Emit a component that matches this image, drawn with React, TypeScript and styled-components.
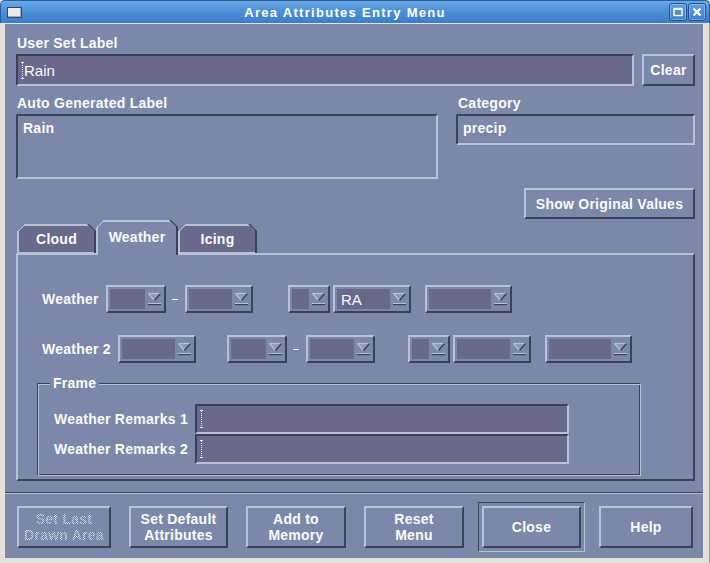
import React from "react";
import styled, { createGlobalStyle, css } from "styled-components";

const C = {
  bg: "#7c88a9",
  field: "#68698b",
  dark: "#3d4156",
  light: "#b9c1d6",
  text: "#fafafa",
  frame: "#e4e1d9",
};

const Global = createGlobalStyle`
  html, body { margin: 0; padding: 0; background: ${C.frame}; }
  body { font-family: "Liberation Sans", Arial, sans-serif; }
  * { box-sizing: border-box; }
`;

const raised = css`
  border-style: solid;
  border-width: 2px;
  border-color: ${C.light} ${C.dark} ${C.dark} ${C.light};
`;
const sunken = css`
  border-style: solid;
  border-width: 2px;
  border-color: ${C.dark} ${C.light} ${C.light} ${C.dark};
`;
const boldFont = css`
  font: bold 14px/16px "Liberation Sans", Arial, sans-serif;
  letter-spacing: 0.25px;
`;

const Window = styled.div`
  width: 710px;
  height: 563px;
  display: flex;
  flex-direction: column;
  background: ${C.frame};
`;

const TitleBar = styled.div`
  height: 23px;
  flex: none;
  display: flex;
  align-items: center;
  padding: 0 3px 0 6px;
  background: linear-gradient(to bottom, #6ba9e7 0%, #4d90d8 45%, #3c7dc7 100%);
  border: 1px solid #2b5d9c;
  border-bottom: none;
  border-radius: 5px 5px 0 0;
`;

const TitleIcon = styled.div`
  width: 15px;
  height: 11px;
  background: #e9e9ec;
  border: 1px solid #33466a;
  box-shadow: inset -1px -1px 0 #a8acb6;
`;

const TitleText = styled.div`
  flex: 1;
  text-align: center;
  color: #fff;
  font: bold 13px "Liberation Sans", Arial, sans-serif;
  letter-spacing: 1.3px;
`;

const TitleButton = styled.div`
  width: 18px;
  height: 18px;
  margin-left: 1px;
  display: flex;
  align-items: center;
  justify-content: center;
  border: 1px solid #23538f;
  border-radius: 3px;
  background: linear-gradient(to bottom, #5f9fe0, #3f80ca);
  box-shadow: inset 0 0 0 1px rgba(255, 255, 255, 0.3);
`;

const FrameBody = styled.div`
  flex: 1;
  display: flex;
  padding: 1px 6px 5px 5px;
  border-right: 1px solid #9e9b93;
  background: ${C.frame};
`;

const Body = styled.div`
  flex: 1;
  display: flex;
  flex-direction: column;
  background: ${C.bg};
  color: ${C.text};
`;

const Main = styled.div`
  display: flex;
  flex-direction: column;
  padding: 11px 8px 0 11px;
`;

const Label = styled.div<{ $pl?: number }>`
  ${boldFont};
  height: 16px;
  padding-left: ${(p) => p.$pl ?? 1}px;
  white-space: nowrap;
`;

const FieldRow = styled.div`
  display: flex;
  gap: 8px;
  margin-top: 3px;
  height: 32px;
`;

const TextField = styled.div`
  ${sunken};
  flex: 1;
  background: ${C.field};
  display: flex;
  align-items: center;
  padding: 0 3px 0 2px;
  font: 15px "Liberation Sans", Arial, sans-serif;
`;

const Button = styled.div<{ $w: number; $h: number }>`
  ${raised};
  ${boldFont};
  width: ${(p) => p.$w}px;
  height: ${(p) => p.$h}px;
  flex: none;
  background: ${C.bg};
  display: flex;
  align-items: center;
  justify-content: center;
  text-align: center;
  white-space: nowrap;
`;

const DisabledText = styled.span`
  color: transparent;
  background-image: repeating-conic-gradient(#dfe3ef 0 25%, transparent 0 50%);
  background-size: 2px 2px;
  -webkit-background-clip: text;
  background-clip: text;
`;

const InfoRow = styled.div`
  display: flex;
  justify-content: space-between;
  margin-top: 9px;
`;

const InfoColumn = styled.div<{ $w: number }>`
  width: ${(p) => p.$w}px;
  display: flex;
  flex-direction: column;
`;

const InfoBox = styled.div<{ $h: number }>`
  ${sunken};
  ${boldFont};
  height: ${(p) => p.$h}px;
  margin-top: 3px;
  padding: 4px 5px;
`;

const RightAction = styled.div`
  display: flex;
  justify-content: flex-end;
  margin-top: 9px;
`;

const TabStrip = styled.div`
  display: flex;
  align-items: flex-end;
  height: 33px;
  margin-top: 1px;
  padding-left: 1px;
  position: relative;
  z-index: 2;
`;

const Tab = styled.div<{ $w: number; $active?: boolean }>`
  ${boldFont};
  position: relative;
  width: ${(p) => p.$w}px;
  height: ${(p) => (p.$active ? 35 : 29)}px;
  margin-bottom: ${(p) => (p.$active ? -2 : 0)}px;
  display: flex;
  align-items: center;
  justify-content: center;
  padding-bottom: ${(p) => (p.$active ? 2 : 0)}px;
  background: ${C.dark};
  clip-path: polygon(0 100%, 0 7px, 7px 0, calc(100% - 7px) 0, 100% 7px, 100% 100%);

  &::before {
    content: "";
    position: absolute;
    inset: 0 2px 0 0;
    background: ${C.light};
    clip-path: polygon(0 100%, 0 7px, 7px 0, calc(100% - 7px) 0, 100% 7px, 100% 100%);
  }
  &::after {
    content: "";
    position: absolute;
    inset: 2px 2px ${(p) => (p.$active ? 0 : 1)}px 2px;
    background: ${(p) => (p.$active ? C.bg : C.field)};
    clip-path: polygon(0 100%, 0 5px, 5px 0, calc(100% - 5px) 0, 100% 5px, 100% 100%);
  }
`;

const TabText = styled.span`
  position: relative;
  z-index: 1;
`;

const Panel = styled.div`
  ${raised};
  height: 228px;
  padding: 30px 0 0 24px;
  display: flex;
  flex-direction: column;
`;

const WxRow = styled.div<{ $mt?: number }>`
  display: flex;
  align-items: center;
  height: 28px;
  margin-top: ${(p) => p.$mt ?? 0}px;
`;

const RowLabel = styled.div<{ $w: number }>`
  ${boldFont};
  width: ${(p) => p.$w}px;
  flex: none;
  white-space: nowrap;
`;

const Combo = styled.div<{ $w: number; $ml?: number }>`
  ${raised};
  width: ${(p) => p.$w}px;
  height: 28px;
  margin-left: ${(p) => p.$ml ?? 0}px;
  flex: none;
  display: flex;
  padding: 2px 0 2px 2px;
  background: ${C.bg};
`;

const ComboField = styled.div`
  flex: 1;
  background: ${C.field};
  display: flex;
  align-items: center;
  padding-left: 4px;
  font: 15px "Liberation Sans", Arial, sans-serif;
`;

const ComboArrow = styled.div`
  width: 19px;
  flex: none;
  display: flex;
  align-items: center;
  padding-left: 3px;
`;

const Dash = styled.div`
  width: 6px;
  height: 1px;
  margin: 1px 7px 0 6px;
  background: ${C.text};
  flex: none;
`;

const Frame = styled.div`
  position: relative;
  width: 604px;
  height: 93px;
  margin: 20px 0 0 -5px;
  border: 1px solid;
  border-color: ${C.dark} ${C.light} ${C.light} ${C.dark};
  box-shadow: inset 1px 1px 0 ${C.light}, inset -1px -1px 0 ${C.dark};
  padding: 20px 0 0 16px;
`;

const FrameLegend = styled.div`
  ${boldFont};
  position: absolute;
  top: -9px;
  left: 12px;
  padding: 0 3px;
  background: ${C.bg};
`;

const RemarksGrid = styled.div`
  display: grid;
  grid-template-columns: 141px 374px;
  grid-template-rows: 30px 30px;
  align-items: center;
`;

const RemarkField = styled.div`
  ${sunken};
  height: 30px;
  background: ${C.field};
  display: flex;
  align-items: center;
  padding-left: 2px;
`;

const Separator = styled.div`
  height: 2px;
  margin-top: 11px;
  border-top: 1px solid ${C.dark};
  border-bottom: 1px solid ${C.light};
`;

const ButtonBar = styled.div`
  display: flex;
  align-items: flex-start;
  gap: 18px;
  padding: 12px 0 0 12px;
`;

const DefaultRing = styled.div`
  margin: -4px -4px 0;
  padding: 3px;
  border: 1px solid;
  border-color: ${C.dark} ${C.light} ${C.light} ${C.dark};
`;

const Cursor: React.FC<{ h?: number }> = ({ h = 17 }) => (
  <svg width="5" height={h} viewBox={`0 0 5 ${h}`} style={{ flex: "none", marginRight: -1 }}>
    <path d={`M1 0.5h3M1 ${h - 0.5}h3`} stroke="#e8e8f0" strokeWidth="1" />
    <path d={`M2.5 1v${h - 2}`} stroke="#e8e8f0" strokeWidth="1" strokeDasharray="1 1" />
  </svg>
);

const Arrow = () => (
  <svg width="13" height="15" viewBox="0 0 13 15">
    <polygon points="0.5,1.5 12.5,1.5 6.5,8.5" fill="#8e98b8" />
    <path d="M0.5 1.5H12.5" stroke={C.light} strokeWidth="1.2" />
    <path d="M0.5 1.5L6.5 8.5" stroke={C.light} strokeWidth="1.2" />
    <path d="M12.5 1.5L6.5 8.5" stroke={C.dark} strokeWidth="1.4" />
    <rect x="0" y="11" width="13" height="1" fill={C.light} />
    <rect x="0" y="12" width="13" height="1.2" fill={C.dark} />
  </svg>
);

const ComboBox: React.FC<{ w: number; ml?: number; value?: string }> = ({ w, ml, value }) => (
  <Combo $w={w} $ml={ml}>
    <ComboField>{value}</ComboField>
    <ComboArrow>
      <Arrow />
    </ComboArrow>
  </Combo>
);

export default function App() {
  return (
    <>
      <Global />
      <Window>
        <TitleBar>
          <TitleIcon />
          <TitleText>Area Attributes Entry Menu</TitleText>
          <TitleButton>
            <svg width="10" height="10" viewBox="0 0 10 10">
              <rect x="1" y="1.5" width="8" height="7" fill="none" stroke="#fff" strokeWidth="1.4" />
              <rect x="1" y="1" width="8" height="2" fill="#fff" />
            </svg>
          </TitleButton>
          <TitleButton>
            <svg width="10" height="10" viewBox="0 0 10 10">
              <path d="M1.5 1.5L8.5 8.5M8.5 1.5L1.5 8.5" stroke="#fff" strokeWidth="2.2" />
            </svg>
          </TitleButton>
        </TitleBar>
        <FrameBody>
          <Body>
            <Main>
              <Label>User Set Label</Label>
              <FieldRow>
                <TextField>
                  <Cursor />
                  Rain
                </TextField>
                <Button $w={53} $h={32}>Clear</Button>
              </FieldRow>
              <InfoRow>
                <InfoColumn $w={422}>
                  <Label>Auto Generated Label</Label>
                  <InfoBox $h={65}>Rain</InfoBox>
                </InfoColumn>
                <InfoColumn $w={239}>
                  <Label $pl={2}>Category</Label>
                  <InfoBox $h={31}>precip</InfoBox>
                </InfoColumn>
              </InfoRow>
              <RightAction>
                <Button $w={171} $h={31}>Show Original Values</Button>
              </RightAction>
              <TabStrip>
                <Tab $w={79}>
                  <TabText>Cloud</TabText>
                </Tab>
                <Tab $w={82} $active>
                  <TabText>Weather</TabText>
                </Tab>
                <Tab $w={79}>
                  <TabText>Icing</TabText>
                </Tab>
              </TabStrip>
              <Panel>
                <WxRow>
                  <RowLabel $w={64}>Weather</RowLabel>
                  <ComboBox w={60} />
                  <Dash />
                  <ComboBox w={68} />
                  <ComboBox w={42} ml={35} />
                  <ComboBox w={78} ml={3} value="RA" />
                  <ComboBox w={87} ml={14} />
                </WxRow>
                <WxRow $mt={22}>
                  <RowLabel $w={76}>Weather 2</RowLabel>
                  <ComboBox w={78} />
                  <ComboBox w={60} ml={31} />
                  <Dash />
                  <ComboBox w={69} />
                  <ComboBox w={42} ml={33} />
                  <ComboBox w={78} ml={3} />
                  <ComboBox w={87} ml={14} />
                </WxRow>
                <Frame>
                  <FrameLegend>Frame</FrameLegend>
                  <RemarksGrid>
                    <RowLabel $w={141}>Weather Remarks 1</RowLabel>
                    <RemarkField>
                      <Cursor h={18} />
                    </RemarkField>
                    <RowLabel $w={141}>Weather Remarks 2</RowLabel>
                    <RemarkField>
                      <Cursor h={18} />
                    </RemarkField>
                  </RemarksGrid>
                </Frame>
              </Panel>
            </Main>
            <Separator />
            <ButtonBar>
              <Button $w={94} $h={42}>
                <DisabledText>
                  Set Last
                  <br />
                  Drawn Area
                </DisabledText>
              </Button>
              <Button $w={99} $h={42}>
                Set Default
                <br />
                Attributes
              </Button>
              <Button $w={100} $h={42}>
                Add to
                <br />
                Memory
              </Button>
              <Button $w={100} $h={42}>
                Reset
                <br />
                Menu
              </Button>
              <DefaultRing>
                <Button $w={99} $h={42}>Close</Button>
              </DefaultRing>
              <Button $w={94} $h={42}>Help</Button>
            </ButtonBar>
          </Body>
        </FrameBody>
      </Window>
    </>
  );
}
